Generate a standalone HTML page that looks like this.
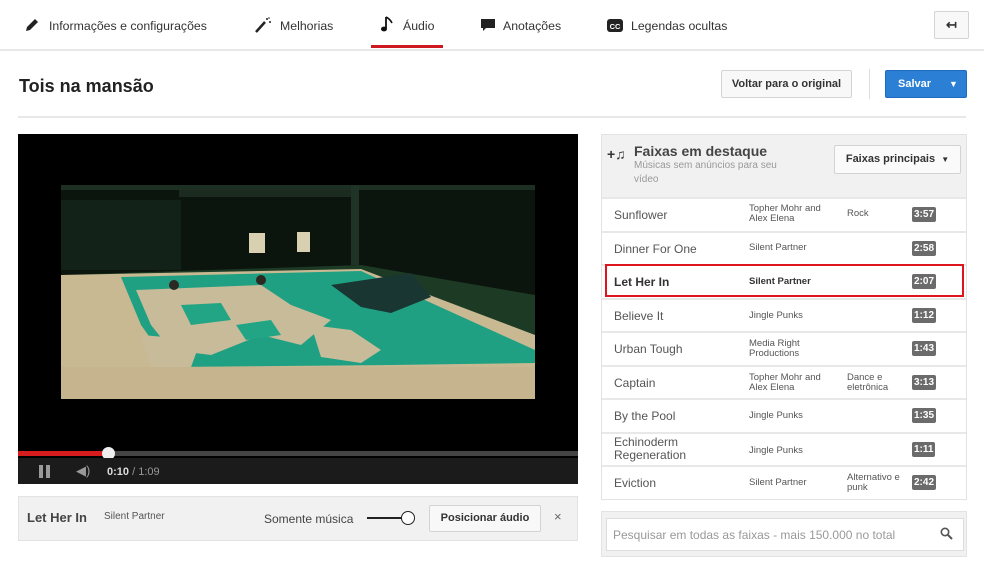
<!DOCTYPE html>
<html><head><meta charset="utf-8"><style>
*{margin:0;padding:0;box-sizing:border-box}
body{width:984px;height:571px;background:#fff;font-family:"Liberation Sans",Arial,sans-serif;color:#333;position:relative;overflow:hidden}
.a{position:absolute}
.tab{position:absolute;top:19px;font-size:12.3px;color:#333;white-space:nowrap}
.btn{position:absolute;border:1px solid #d3d3d3;background:#f8f8f8;border-radius:2px;font-size:11px;font-weight:bold;color:#333;text-align:center}
.row{position:absolute;left:602px;width:364px;height:34px;border-top:2px solid #e8e8e8;font-size:12px;color:#555}
.row .t{position:absolute;left:12px;top:9px}
.row .t2{position:absolute;left:12px;top:2px;line-height:13px}
.row .ar{position:absolute;left:147px;font-size:9.5px;line-height:10px;color:#555}
.row .g{position:absolute;left:245px;font-size:9.5px;line-height:10px;color:#555}
.row .d{position:absolute;left:310px;top:8px;background:#6b6b6b;color:#fff;font-size:10px;font-weight:bold;padding:2px 2px;border-radius:2px;height:15px;line-height:11px}
</style></head><body>
<!-- tabs -->
<svg class="a" style="left:24px;top:17px" width="16" height="16" viewBox="0 0 16 16"><path d="M2 14 L3 10 L11 2 L14 5 L6 13 Z" fill="#222"/></svg>
<div class="tab" style="left:49px">Informações e configurações</div>
<svg class="a" style="left:254px;top:16px" width="18" height="18" viewBox="0 0 18 18"><path d="M2 16 L11 6" stroke="#222" stroke-width="2.5"/><circle cx="13" cy="3" r="1" fill="#222"/><circle cx="16" cy="6" r="1" fill="#222"/><circle cx="15" cy="2" r=".8" fill="#222"/></svg>
<div class="tab" style="left:280px">Melhorias</div>
<svg class="a" style="left:380px;top:15px" width="14" height="18" viewBox="0 0 14 18"><path d="M6 2 L6 13" stroke="#111" stroke-width="1.8"/><ellipse cx="4" cy="14" rx="3" ry="2.4" fill="#111"/><path d="M6 2 Q10 4 12 8" stroke="#111" stroke-width="1.6" fill="none"/></svg>
<div class="tab" style="left:403px">Áudio</div>
<div class="a" style="left:371px;top:45px;width:72px;height:3px;background:#cc181e"></div>
<svg class="a" style="left:480px;top:18px" width="16" height="15" viewBox="0 0 16 15"><path d="M1 1 H15 V10 H6 L3 13 V10 H1 Z" fill="#222"/></svg>
<div class="tab" style="left:503px">Anotações</div>
<svg class="a" style="left:607px;top:19px" width="16" height="13" viewBox="0 0 16 13"><rect x="0" y="0" width="16" height="13" rx="3" fill="#222"/><text x="8" y="10" font-size="7.5" font-weight="bold" fill="#fff" text-anchor="middle" font-family="Liberation Sans">CC</text></svg>
<div class="tab" style="left:631px">Legendas ocultas</div>
<div class="btn" style="left:934px;top:11px;width:35px;height:28px;font-size:13px;line-height:25px">↤</div>
<div class="a" style="left:0;top:49px;width:984px;height:2px;background:#e8e8e8"></div>
<!-- title -->
<div class="a" style="left:19px;top:76px;font-size:18px;font-weight:bold;color:#222">Tois na mansão</div>
<div class="btn" style="left:721px;top:70px;width:131px;height:28px;line-height:26px">Voltar para o original</div>
<div class="a" style="left:869px;top:69px;width:1px;height:30px;background:#ddd"></div>
<div class="a" style="left:885px;top:70px;width:82px;height:28px;background:#2b7fd4;border:1px solid #1e6bbd;border-radius:2px;color:#fff;font-size:11px;font-weight:bold;line-height:26px;padding-left:12px">Salvar<span style="position:absolute;left:63px;font-size:9px">▼</span></div>
<div class="a" style="left:18px;top:116px;width:948px;height:2px;background:#e8e8e8"></div>
<!-- video -->
<div class="a" style="left:18px;top:134px;width:560px;height:350px;background:#000"></div>
<svg class="a" style="left:61px;top:185px" width="474" height="214" viewBox="0 0 474 214">
<rect width="474" height="214" fill="#0b140d"/>
<rect x="0" y="0" width="474" height="5" fill="#1d2e22"/>
<rect x="118" y="5" width="180" height="7" fill="#1c2b20"/>
<rect x="290" y="0" width="8" height="80" fill="#1f3326"/>
<rect x="0" y="15" width="120" height="70" fill="#122218"/>
<polygon points="0,90 300,80 474,110 474,214 0,214" fill="#1c3a24"/>
<polygon points="0,90 300,84 474,150 474,214 0,214" fill="#c9b993"/>
<polygon points="60,92 300,86 474,165 474,178 330,180 110,182 80,140" fill="#1fa082"/>
<g fill="#c8bb99">
<polygon points="75,105 200,100 230,120 270,135 240,160 200,150 150,170 110,165 90,140"/>
<polygon points="250,140 290,145 320,165 300,178 260,172"/>
<polygon points="80,150 140,155 130,182 90,182"/>
</g>
<g fill="#22a585">
<polygon points="120,120 160,118 170,135 130,140"/>
<polygon points="175,140 210,135 220,150 185,155"/>
</g>
<polygon points="270,100 350,88 370,112 330,128 300,122" fill="#1a3633"/>
<rect x="0" y="182" width="474" height="32" fill="#c6b48f"/>
<rect x="188" y="48" width="16" height="20" fill="#d8d0b0"/>
<rect x="236" y="47" width="13" height="20" fill="#d8d0b0"/>
<circle cx="113" cy="100" r="5" fill="#2a2a22"/>
<circle cx="200" cy="95" r="5" fill="#2a2a22"/>
</svg>
<div class="a" style="left:18px;top:451px;width:560px;height:5px;background:#444"></div>
<div class="a" style="left:18px;top:451px;width:91px;height:5px;background:#d61c1c"></div>
<div class="a" style="left:102px;top:447px;width:13px;height:13px;border-radius:50%;background:#eee"></div>
<div class="a" style="left:18px;top:458px;width:560px;height:26px;background:#1b1b1b"></div>
<div class="a" style="left:39px;top:465px;width:4px;height:13px;background:#999"></div>
<div class="a" style="left:46px;top:465px;width:4px;height:13px;background:#999"></div>
<div class="a" style="left:76px;top:463px;font-size:13px;color:#999">◀)</div>
<div class="a" style="left:107px;top:466px;font-size:11px;color:#ddd"><b>0:10</b> <span style="color:#999">/ 1:09</span></div>
<!-- bottom bar -->
<div class="a" style="left:18px;top:496px;width:560px;height:45px;background:#f1f1f1;border:1px solid #e3e3e3"></div>
<div class="a" style="left:27px;top:510px;font-size:13px;font-weight:bold;color:#444">Let Her In</div>
<div class="a" style="left:104px;top:511px;font-size:10px;color:#555">Silent Partner</div>
<div class="a" style="left:264px;top:512px;font-size:12px;color:#444">Somente música</div>
<div class="a" style="left:367px;top:517px;width:38px;height:2px;background:#222"></div>
<div class="a" style="left:401px;top:511px;width:14px;height:14px;border-radius:50%;border:1.5px solid #222;background:#fff"></div>
<div class="btn" style="left:429px;top:505px;width:112px;height:27px;line-height:25px">Posicionar áudio</div>
<div class="a" style="left:554px;top:509px;font-size:13px;color:#666">×</div>
<!-- right panel -->
<div class="a" style="left:601px;top:134px;width:366px;height:366px;border:1px solid #e3e3e3;background:#fff"></div>
<div class="a" style="left:602px;top:135px;width:364px;height:62px;background:#f1f1f1"></div>
<div class="a" style="left:607px;top:146px;font-size:14px;font-weight:bold;color:#333">+♫</div>
<div class="a" style="left:634px;top:143px;font-size:14px;font-weight:bold;color:#444">Faixas em destaque</div>
<div class="a" style="left:634px;top:159px;font-size:10px;color:#999;line-height:14px;width:170px">Músicas sem anúncios para seu vídeo</div>
<div class="btn" style="left:834px;top:145px;width:127px;height:29px;line-height:27px;background:#fafafa">Faixas principais &nbsp;<span style="font-size:8px">▼</span></div>
<div class="row" style="top:197px"><span class="t">Sunflower</span><span class="ar" style="top:5px">Topher Mohr and<br>Alex Elena</span><span class="g" style="top:10px">Rock</span><span class="d">3:57</span></div>
<div class="row" style="top:231px"><span class="t">Dinner For One</span><span class="ar" style="top:10px">Silent Partner</span><span class="d">2:58</span></div>
<div class="row" style="top:264px"><span class="t" style="font-weight:bold;color:#333">Let Her In</span><span class="ar" style="top:11px;font-weight:bold;color:#333">Silent Partner</span><span class="d">2:07</span></div>
<div class="a" style="left:605px;top:264px;width:359px;height:33px;border:2px solid #e0141e"></div>
<div class="row" style="top:298px"><span class="t">Believe It</span><span class="ar" style="top:11px">Jingle Punks</span><span class="d">1:12</span></div>
<div class="row" style="top:331px"><span class="t">Urban Tough</span><span class="ar" style="top:6px">Media Right<br>Productions</span><span class="d">1:43</span></div>
<div class="row" style="top:365px"><span class="t">Captain</span><span class="ar" style="top:6px">Topher Mohr and<br>Alex Elena</span><span class="g" style="top:6px">Dance e<br>eletrônica</span><span class="d">3:13</span></div>
<div class="row" style="top:398px"><span class="t">By the Pool</span><span class="ar" style="top:11px">Jingle Punks</span><span class="d">1:35</span></div>
<div class="row" style="top:432px"><span class="t2">Echinoderm<br>Regeneration</span><span class="ar" style="top:12px">Jingle Punks</span><span class="d">1:11</span></div>
<div class="row" style="top:465px"><span class="t">Eviction</span><span class="ar" style="top:11px">Silent Partner</span><span class="g" style="top:6px">Alternativo e<br>punk</span><span class="d">2:42</span></div>
<!-- search -->
<div class="a" style="left:601px;top:511px;width:366px;height:46px;background:#f1f1f1;border:1px solid #e3e3e3"></div>
<div class="a" style="left:606px;top:518px;width:358px;height:33px;background:#fff;border:1px solid #ddd"></div>
<div class="a" style="left:613px;top:528px;font-size:12px;color:#999">Pesquisar em todas as faixas - mais 150.000 no total</div>
<svg class="a" style="left:940px;top:527px" width="13" height="13" viewBox="0 0 13 13"><circle cx="5" cy="5" r="3.7" stroke="#555" stroke-width="1.6" fill="none"/><path d="M8 8 L12 12" stroke="#555" stroke-width="2"/></svg>
</body></html>
